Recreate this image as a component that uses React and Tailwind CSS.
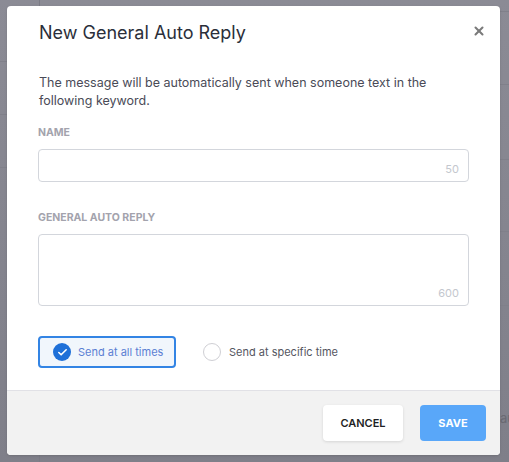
import { Check, X } from "lucide-react";

const font = { fontFamily: "Inter, 'Noto Sans', sans-serif" };

function CountedField({ label, limit, tall }) {
  return (
    <div>
      <p className="text-[10.5px] font-bold uppercase leading-[14px] text-[#a3a3ad]">{label}</p>
      <div className={`mt-[9px] flex items-end justify-end rounded border border-[#d3d6dc] px-[9px] pb-[4px] ${tall ? "h-[72px]" : "h-[33px]"}`}>
        <span className="text-[11px] text-[#c4c7ce]">{limit}</span>
      </div>
    </div>
  );
}

export default function App() {
  return (
    <div className="relative h-[462px] w-[509px] overflow-hidden bg-gradient-to-b from-[#8b8b95] to-[#7f7f89]" style={font}>
      {/* page behind the overlay */}
      <div className="flex h-full">
        <div className="flex w-[40px] flex-col border-r border-[#7b7b85]">
          <div className="h-[62px] border-b border-[#80808a]" />
          <div className="h-[53px] border-b border-[#80808a]" />
          <div className="h-[53px] border-b border-[#80808a]" />
        </div>
        <div className="flex flex-1 flex-col items-end">
          <div className="h-[12px] w-full border-b border-[#80808a]" />
          <div className="h-[73px] w-full border-b border-[#80808a]" />
          <div className="h-[75px] w-full border-b border-[#80808a]" />
          <div className="h-[72px] w-full border-b border-[#80808a]" />
          <div className="h-[74px] w-full border-b border-[#80808a]" />
          <p className="mt-[103px] -mr-[6px] text-[13px] text-[#6a6a73]">au</p>
        </div>
      </div>

      {/* modal */}
      <div className="absolute left-[7px] top-[6px] flex h-[449px] w-[493px] flex-col overflow-hidden rounded bg-white shadow">
        <div className="flex-1 px-[31px] pt-[16px]">
          <div className="flex items-start justify-between">
            <h2 className="pl-px text-[18px] font-normal leading-[22px] text-[#2b2f3a]">New General Auto Reply</h2>
            <X size={14} strokeWidth={3.5} className="mr-[-17px] mt-[2px] text-[#7a7a7a]" />
          </div>
          <p className="mt-[30px] w-[420px] pl-px text-[12.5px] leading-[18px] text-[#4a4b57]">
            The message will be automatically sent when someone text in the following keyword.
          </p>
          <div className="mt-[16px]">
            <CountedField label="Name" limit="50" />
          </div>
          <div className="mt-[29px]">
            <CountedField label="General Auto Reply" limit="600" tall />
          </div>
          <div className="mt-[30px] flex items-center gap-[27px]">
            <label className="flex h-[32px] w-[138px] items-center gap-[7px] rounded border-2 border-[#3384e4] bg-[#f1f6fc] pl-[13px]">
              <span className="flex h-[18px] w-[18px] items-center justify-center rounded-full bg-[#1f70d8]">
                <Check size={11} strokeWidth={3.5} className="text-white" />
              </span>
              <span className="text-[11px] text-[#5b7fd3]">Send at all times</span>
            </label>
            <label className="flex items-center gap-[8px]">
              <span className="h-[18px] w-[18px] rounded-full border border-[#cfcfd4] bg-white" />
              <span className="text-[11px] text-[#55565f]">Send at specific time</span>
            </label>
          </div>
        </div>
        <div className="flex h-[65px] items-center justify-end gap-[17px] border-t border-[#e1e1e6] bg-[#f2f2f2] pr-[14px]">
          <button className="h-[36px] w-[80px] rounded bg-white text-[11px] font-semibold text-[#1f1f24] shadow-[0_1px_3px_rgba(0,0,0,0.12)]">CANCEL</button>
          <button className="h-[36px] w-[66px] rounded bg-[#59a7f9] text-[11px] font-bold text-white">SAVE</button>
        </div>
      </div>
    </div>
  );
}
